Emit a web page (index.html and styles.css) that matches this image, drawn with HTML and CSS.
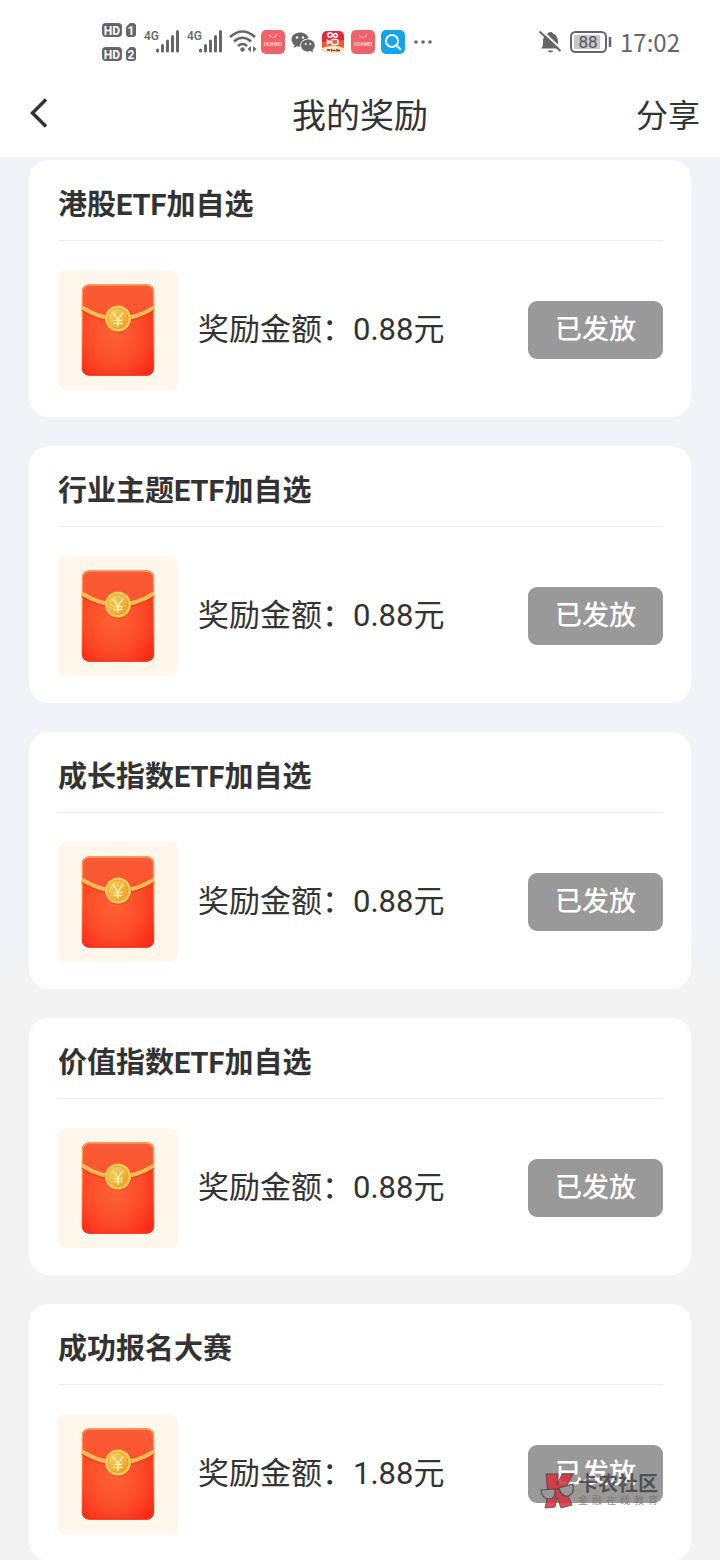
FILE: index.html
```html
<!DOCTYPE html>
<html lang="zh-CN">
<head>
<meta charset="utf-8">
<meta name="viewport" content="width=device-width, initial-scale=1">
<title>我的奖励</title>
<link rel="stylesheet" href="styles.css">
</head>
<body>
<svg class="defs" width="0" height="0" aria-hidden="true">
  <defs>
    <radialGradient id="red" cx="0.45" cy="0.5" r="0.75">
      <stop offset="0" stop-color="#ff6334"/><stop offset="0.5" stop-color="#fc4d2b"/><stop offset="1" stop-color="#f9200d"/>
    </radialGradient>
    <linearGradient id="flap" x1="0" y1="0" x2="0" y2="1">
      <stop offset="0" stop-color="#f75b35"/><stop offset="1" stop-color="#fd5330"/>
    </linearGradient>
    <linearGradient id="edge" x1="0" y1="0" x2="0" y2="1">
      <stop offset="0" stop-color="#ff9a55"/><stop offset="0.45" stop-color="#ff7a35"/><stop offset="1" stop-color="#f5301a"/>
    </linearGradient>
    <linearGradient id="gold" x1="0" y1="0" x2="1" y2="1">
      <stop offset="0" stop-color="#ffd568"/><stop offset="1" stop-color="#e89a1c"/>
    </linearGradient>
    <symbol id="signal" viewBox="0 0 37 24">
      <text x="0" y="10" class="net">4G</text>
      <path d="M13.500 20v1M18.500 15.500v5.500M23.500 11v10M28.500 6.500v14.500M33.500 1.500v19.500" stroke="#666" stroke-width="3" stroke-linecap="round"/>
    </symbol>
    <symbol id="huawei" viewBox="0 0 24 24">
      <rect width="24" height="24" rx="5" fill="#f0616a"/>
      <path d="M8 4.500q4 6 8 0" fill="none" stroke="#ffb9b9" stroke-width="1.200"/>
      <text x="12" y="15.500" class="brand">HUAWEI</text>
    </symbol>
    <symbol id="packet" viewBox="0 0 120 120">
      <rect x="24" y="14.500" width="72" height="91" rx="7" fill="url(#red)"/>
      <path d="M24 37V22q0-7 7-7h58q7 0 7 7v15Q60 62 24 37z" fill="url(#flap)"/>
      <rect x="24.500" y="15" width="71" height="90" rx="7" fill="none" stroke="url(#edge)" stroke-width="1.500"/>
      <path d="M24 39Q60 62 96 39" fill="none" stroke="#d63a16" stroke-width="4" opacity="0.5"/>
      <path d="M24 37.500Q60 60 96 37.500" fill="none" stroke="#fabb57" stroke-width="4"/>
      <circle cx="60" cy="49.500" r="13.500" fill="#d9501a" opacity="0.6"/>
      <circle cx="60" cy="48.500" r="13" fill="#fcc95c"/>
      <circle cx="60" cy="48.500" r="10.200" fill="url(#gold)" stroke="#e29b27" stroke-width="0.800"/>
      <path d="M55 42.500l5 7 5-7M60 49.500v7.500M55.500 50.500h9M55.500 53.500h9" fill="none" stroke="#fff0ae" stroke-width="1.500"/>
    </symbol>
  </defs>
</svg>
<div class="screen">
  <div class="status">
    <svg width="36" height="42" viewBox="0 0 36 42">
      <rect x="0" y="2" width="20" height="14" rx="4" fill="#666"/><text x="10" y="13.500" class="hd">HD</text>
      <path d="M28 2h3q3 0 3 3v8q0 3-3 3h-4q-3 0-3-3V6z" fill="#666"/><text x="29" y="13.500" class="hd">1</text>
      <rect x="0" y="26" width="20" height="14" rx="4" fill="#666"/><text x="10" y="37.500" class="hd">HD</text>
      <path d="M28 26h3q3 0 3 3v8q0 3-3 3h-4q-3 0-3-3v-7z" fill="#666"/><text x="29" y="37.500" class="hd">2</text>
    </svg>
    <svg width="37" height="24"><use href="#signal"/></svg>
    <svg width="37" height="24"><use href="#signal"/></svg>
    <svg class="wifi" width="25" height="24" viewBox="0 0 25 24">
      <g fill="none" stroke="#666" stroke-width="2.600"><path d="M0 7Q12.500-4 25 7M4 11.500q8.500-7.500 17 0M8 16q4.500-4 9 0"/></g>
      <circle cx="12.500" cy="19.500" r="2.200" fill="#666"/>
      <path d="M21 16v6l-3.500-3zM23 16v6l3.500-3z" fill="#666"/>
    </svg>
    <svg width="24" height="24"><use href="#huawei"/></svg>
    <svg width="24" height="24" viewBox="0 0 24 24">
      <path d="M9 2.500c-5 0-8.500 3-8.500 7 0 2.300 1.200 4.200 3 5.500l-.8 3 3.300-1.700c1 .3 2 .5 3 .5C9 12 12.500 8.500 17.500 8.500 17 5 13.500 2.500 9 2.500z" fill="#666"/>
      <path d="M17 9.500c-4 0-7 2.600-7 6s3 6 7 6c.9 0 1.700-.1 2.500-.4l2.500 1.400-.6-2.500c1.600-1.100 2.400-2.700 2.400-4.500 0-3.400-3-6-6.800-6z" fill="#666"/>
      <g fill="#fff"><circle cx="6" cy="7.500" r="1.200"/><circle cx="12" cy="7.500" r="1.200"/><circle cx="14.700" cy="14" r="1"/><circle cx="19.300" cy="14" r="1"/></g>
    </svg>
    <svg width="24" height="24" viewBox="0 0 24 24">
      <rect x="1" y="1" width="22" height="22" rx="5" fill="#e8263c"/>
      <path d="M1 12L23 10v8H1z" fill="#f2592e"/>
      <path d="M1 18q11-5 22 0 0 5-5 5H6q-5 0-5-5z" fill="#fbe6c4"/>
      <g fill="none" stroke="#fff" stroke-width="1.500"><circle cx="9" cy="5" r="2.200"/><circle cx="14.500" cy="5.300" r="1.900"/><rect x="10.500" y="9.500" width="6.500" height="5" rx="1.500"/><path d="M10 12l-3.500-1.800v3.600z"/></g>
      <path d="M6 20h3M10.500 19v2.500M12 20.500h2.500M16 19v2.500M17 20.500h2" stroke="#8a2018" stroke-width="1.500"/>
    </svg>
    <svg width="24" height="24"><use href="#huawei"/></svg>
    <svg width="24" height="24" viewBox="0 0 24 24">
      <rect width="24" height="24" rx="5" fill="#12a5ee"/>
      <circle cx="11" cy="11" r="6" fill="none" stroke="#fff" stroke-width="1.800"/><path d="M15.300 15.300l4 4" stroke="#fff" stroke-width="2.200" stroke-linecap="round"/>
    </svg>
    <svg width="24" height="24" viewBox="0 0 24 24" fill="#666"><circle cx="5" cy="12" r="1.800"/><circle cx="12" cy="12" r="1.800"/><circle cx="19" cy="12" r="1.800"/></svg>
    <div class="status-right">
      <svg width="24" height="24" viewBox="0 0 24 24">
        <path d="M3 18.500c2-2 2-4 2-7 0-4 2-7 5-8 .5-2 4.500-2 5 0 3 1 5 4 5 8s0 5 1.500 7z" fill="#666"/>
        <path d="M9.500 20.500h6q-1 2-3 2t-3-2z" fill="#666"/>
        <path d="M3 0L24 19.500" stroke="#fff" stroke-width="2"/><path d="M1.500 1.500L22.500 21" stroke="#666" stroke-width="2"/>
      </svg>
      <svg width="42" height="24" viewBox="0 0 42 24">
        <rect x="1" y="2" width="35" height="20" rx="4.500" fill="none" stroke="#666" stroke-width="2"/>
        <rect x="4" y="5" width="26" height="14" rx="1" fill="#c8c8c8"/>
        <text x="18" y="18" class="level">88</text>
        <path d="M40 7v10" stroke="#666" stroke-width="2.500"/>
      </svg>
      <time>17:02</time>
    </div>
  </div>
  <header class="header">
    <button class="back" type="button" aria-label="返回">
      <svg width="20" height="32" viewBox="0 0 20 32"><path d="M18 2.500L4.500 16 18 29.500" fill="none" stroke="#333" stroke-width="3.500"/></svg>
    </button>
    <h1>我的奖励</h1>
    <button class="share" type="button">分享</button>
  </header>
  <main class="list">
    <section class="card">
      <h2>港股ETF加自选</h2>
      <div class="reward"><svg class="thumb" viewBox="0 0 120 120"><use href="#packet"/></svg><p>奖励金额：0.88元</p><button class="sent" type="button">已发放</button></div>
    </section>
    <section class="card">
      <h2>行业主题ETF加自选</h2>
      <div class="reward"><svg class="thumb" viewBox="0 0 120 120"><use href="#packet"/></svg><p>奖励金额：0.88元</p><button class="sent" type="button">已发放</button></div>
    </section>
    <section class="card">
      <h2>成长指数ETF加自选</h2>
      <div class="reward"><svg class="thumb" viewBox="0 0 120 120"><use href="#packet"/></svg><p>奖励金额：0.88元</p><button class="sent" type="button">已发放</button></div>
    </section>
    <section class="card">
      <h2>价值指数ETF加自选</h2>
      <div class="reward"><svg class="thumb" viewBox="0 0 120 120"><use href="#packet"/></svg><p>奖励金额：0.88元</p><button class="sent" type="button">已发放</button></div>
    </section>
    <section class="card">
      <h2>成功报名大赛</h2>
      <div class="reward"><svg class="thumb" viewBox="0 0 120 120"><use href="#packet"/></svg><p>奖励金额：1.88元</p><button class="sent" type="button">已发放</button></div>
    </section>
  </main>
  <div class="watermark">
    <svg width="36" height="36" viewBox="0 0 36 36">
      <path d="M6 1h12l-1 11 5-11h11l-8 15 7 16-11 3-4-11-2 10-10 1 3-13z" fill="#d9303e" stroke="#6b3035" stroke-width="1"/>
      <g fill="#999" stroke="#444" stroke-width="1.200"><path d="M1 17l14-1q1 10-6 10-7 0-8-9zM19 15l14-4q2 10-5 12-7 1-9-8z"/></g><path d="M15 17q2-2 4-1" fill="none" stroke="#444" stroke-width="1.200"/>
    </svg>
    <div class="mark-text"><strong>卡农社区</strong><span>金融在线教育</span></div>
  </div>
</div>
</body>
</html>
```
FILE: styles.css
```css
* { box-sizing: border-box; }
body, h1, h2, p { margin: 0; }
body, button {
  font-family: "Roboto", "Noto Sans CJK SC", sans-serif;
  color: #333;
}
button { border: 0; padding: 0; background: none; }
svg { display: block; flex: none; }
.defs { position: absolute; }
.screen {
  position: relative;
  display: flex;
  flex-direction: column;
  height: 100vh;
  overflow: hidden;
  background: #f3f3f3;
}
.status {
  display: flex;
  flex: none;
  align-items: center;
  gap: 6px;
  height: 74px;
  padding: 10px 40px 0 102px;
  background: #fff;
}
.wifi { overflow: visible; }
.status-right {
  display: flex;
  align-items: center;
  gap: 8px;
  margin-left: auto;
  color: #666;
  font-family: "Noto Sans CJK SC", sans-serif;
  font-size: 24px;
  line-height: 26px;
}
.hd { font: bold 12px "Roboto", sans-serif; fill: #fff; text-anchor: middle; }
.net { font: 500 12px "Roboto", sans-serif; fill: #666; }
.brand { font: bold 5px "Roboto", sans-serif; fill: #ffd0d0; text-anchor: middle; }
.level { font: 17px "Roboto", sans-serif; fill: #555; text-anchor: middle; }
.header {
  display: grid;
  grid-template-columns: 1fr auto 1fr;
  flex: none;
  align-items: center;
  height: 83px;
  padding: 0 20px;
  background: #fff;
}
.header h1 { font-size: 34px; font-weight: 400; line-height: 48px; }
.back { justify-self: start; padding: 0 0 6px 8px; }
.share { justify-self: end; font-size: 32px; line-height: 48px; }
.list {
  display: flex;
  flex: 1;
  flex-direction: column;
  gap: 29px;
  min-height: 0;
  padding: 3px 29px 0;
  overflow-y: auto;
  scrollbar-width: none;
  background: linear-gradient(#f1f3f9 0, #f2f3f8 780px, #f3f3f3 820px);
}
.card { flex: none; padding: 0 28px 27px 29px; border-radius: 20px; background: #fff; }
.card h2 {
  padding: 25px 0 15px;
  border-bottom: 1px solid #ececec;
  font-size: 29px;
  font-weight: 700;
  line-height: 40px;
}
.reward { display: flex; align-items: center; gap: 20px; padding-top: 29px; }
.thumb { width: 120px; height: 120px; border-radius: 8px; background: #fff6ec; }
.reward p { flex: 1; font-size: 31px; line-height: 44px; }
.sent {
  width: 135px;
  height: 58px;
  border-radius: 9px;
  background: #999;
  color: #fff;
  font-size: 27px;
  font-weight: 500;
  line-height: 40px;
}
.watermark {
  position: absolute;
  right: 62px;
  bottom: 51px;
  display: flex;
  align-items: center;
  gap: 2px;
  opacity: 0.85;
}
.mark-text { display: flex; flex-direction: column; width: 80px; }
.mark-text strong { color: #444; font-size: 20px; font-weight: 700; line-height: 20px; }
.mark-text span { color: #777; font-size: 10px; line-height: 14px; text-align-last: justify; }
```
